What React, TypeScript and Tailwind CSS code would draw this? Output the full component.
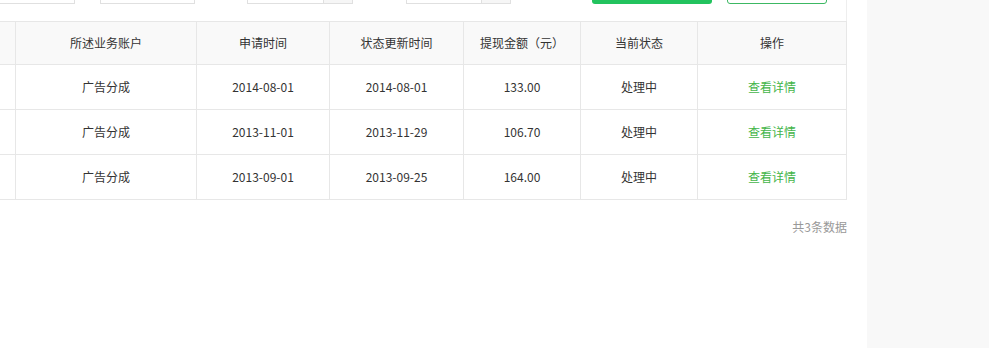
import React from "react";

const rows = [
  { acc: "广告分成", apply: "2014-08-01", upd: "2014-08-01", amt: "133.00", st: "处理中" },
  { acc: "广告分成", apply: "2013-11-01", upd: "2013-11-29", amt: "106.70", st: "处理中" },
  { acc: "广告分成", apply: "2013-09-01", upd: "2013-09-25", amt: "164.00", st: "处理中" },
];

const grid = "grid grid-cols-[16px_181px_133px_134px_117px_117px_149px]";
const cell = "flex items-center justify-center border-r border-b border-[#e7e7e7]";

export default function App() {
  return (
    <div
      className="flex w-[989px] h-[348px] overflow-hidden bg-white text-[12px] text-[#333]"
      style={{ fontFamily: '"Noto Sans CJK SC", "Noto Sans", sans-serif' }}
    >
      <div className="w-[847px] shrink-0 flex flex-col">
        <div className="h-[21px] shrink-0 flex items-end border-r border-[#eeeeee]">
          <div className="flex h-[30px] mb-[17px]">
            <div className="ml-[-30px] w-[105px] h-[30px] border border-[#e0e0e0] bg-white" />
            <div className="ml-[25px] w-[95px] h-[30px] border border-[#e0e0e0] bg-white" />
            <div className="ml-[52px] w-[106px] h-[30px] border border-[#e0e0e0] bg-white flex justify-end">
              <div className="w-[29px] h-full border-l border-[#e0e0e0] bg-[#f6f6f6]" />
            </div>
            <div className="ml-[53px] w-[105px] h-[30px] border border-[#e0e0e0] bg-white flex justify-end">
              <div className="w-[29px] h-full border-l border-[#e0e0e0] bg-[#f6f6f6]" />
            </div>
            <div className="ml-[81px] w-[120px] h-[30px] rounded-[3px] bg-[#22c35e]" />
            <div className="ml-[15px] w-[100px] h-[30px] rounded-[3px] border border-[#3cb863] bg-white" />
          </div>
        </div>
        <div className="border-t border-[#e7e7e7]">
          <div className={`${grid} h-[43px] bg-[#f9f9f9]`}>
            <div className={cell} />
            <div className={cell}>所述业务账户</div>
            <div className={cell}>申请时间</div>
            <div className={cell}>状态更新时间</div>
            <div className={cell}>提现金额（元）</div>
            <div className={cell}>当前状态</div>
            <div className={cell}>操作</div>
          </div>
          {rows.map((r, i) => (
            <div key={i} className={`${grid} h-[45px] bg-white`}>
              <div className={cell} />
              <div className={cell}>{r.acc}</div>
              <div className={cell}>{r.apply}</div>
              <div className={cell}>{r.upd}</div>
              <div className={cell}>{r.amt}</div>
              <div className={cell}>{r.st}</div>
              <div className={cell}>
                <a className="text-[#44b549] cursor-pointer">查看详情</a>
              </div>
            </div>
          ))}
        </div>
        <div className="mt-[19px] leading-[16px] text-right text-[#999]">共3条数据</div>
      </div>
      <div className="w-[20px] shrink-0" />
      <div className="flex-1 bg-[#f8f8f8]" />
    </div>
  );
}
